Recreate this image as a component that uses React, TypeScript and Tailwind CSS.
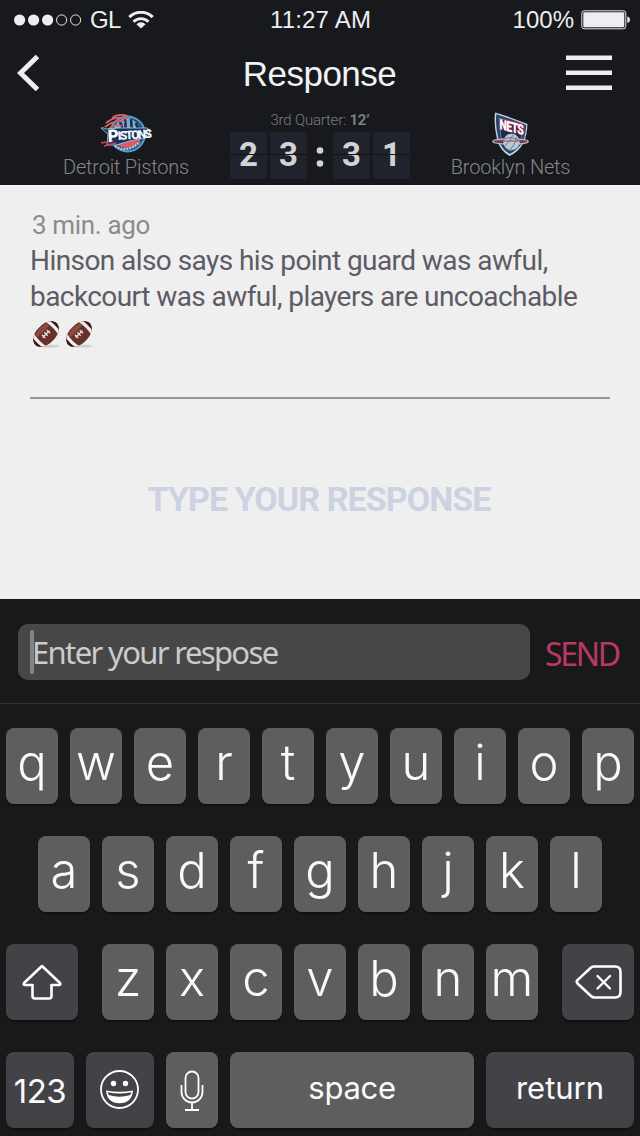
import React from "react";

const TOP_ROW = ["q", "w", "e", "r", "t", "y", "u", "i", "o", "p"];
const HOME_ROW = ["a", "s", "d", "f", "g", "h", "j", "k", "l"];
const BOTTOM_ROW = ["z", "x", "c", "v", "b", "n", "m"];

function StatusBar() {
  return (
    <div className="flex h-10 items-center justify-between pr-[10px] pl-[14px] font-['Liberation_Sans',sans-serif] text-2xl leading-10 text-[#eeeef0]">
      <div className="flex w-[197px] items-center">
        <svg className="mr-2" width="68" height="12" viewBox="0 0 68 12" fill="none">
          <circle cx="5.6" cy="6" r="5.6" fill="#eeeef0" />
          <circle cx="19.6" cy="6" r="5.6" fill="#eeeef0" />
          <circle cx="33.6" cy="6" r="5.6" fill="#eeeef0" />
          <circle cx="47.6" cy="6" r="5.1" stroke="#e2e2e4" />
          <circle cx="61.6" cy="6" r="5.1" stroke="#e2e2e4" />
        </svg>
        <span className="w-[38px] tracking-[-0.6px]">GL</span>
        <svg width="26" height="19" viewBox="0 0 26 19" fill="none" stroke="#eeeef0">
          <path d="M1.300 6.100a16.600 16.600 0 0 1 23.400 0" strokeWidth="3" />
          <path d="M5.500 10.700a10.600 10.600 0 0 1 15 0" strokeWidth="2.800" />
          <path d="M13 17.500l-4.600-4.300a6.600 6.600 0 0 1 9.200 0z" fill="#eeeef0" stroke="none" />
        </svg>
      </div>
      <span className="whitespace-nowrap tracking-[0.200px]">11:27 AM</span>
      <div className="flex w-[200px] items-center justify-end">
        <span className="mr-[7px]">100%</span>
        <svg className="overflow-visible" width="49" height="20" viewBox="0 0 49 20" fill="none">
          <rect x="0.8" y="0.8" width="44" height="18" rx="2.400" stroke="#e6e6e8" />
          <rect x="2.300" y="2.300" width="41" height="15" rx="1" fill="#eeeef0" />
          <path d="M46.300 6.600c3.600.8 3.600 5.600 0 6.400z" fill="#eeeef0" />
        </svg>
      </div>
    </div>
  );
}

function NavBar() {
  return (
    <div className="flex h-[68px] items-center justify-between pr-7 pl-[17px]">
      <div className="w-[56px]">
        <svg className="mt-[-2px]" width="46" height="36" viewBox="0 0 46 36" fill="none">
          <path d="M20.500 1.500L3.500 18l17 16.500" stroke="#eeeef2" strokeWidth="5" strokeLinejoin="miter" />
        </svg>
      </div>
      <h1 className="font-['Liberation_Sans',sans-serif] text-[35px] leading-[68px] tracking-[-0.500px] text-[#f2f2f4]">Response</h1>
      <svg className="mt-[-3px]" width="46" height="36" viewBox="0 0 46 36" fill="#eeeef2">
        <rect y="0.500" width="46" height="4.500" />
        <rect y="15.500" width="46" height="4.500" />
        <rect y="30.500" width="46" height="4.500" />
      </svg>
    </div>
  );
}

function PistonsLogo() {
  return (
    <svg className="overflow-visible" width="52" height="40" viewBox="0 0 52 40">
      <circle cx="27.500" cy="20" r="18.500" fill="#5d9bc4" />
      <circle cx="27.500" cy="20" r="16.500" fill="#1f4e83" />
      <path d="M14 13C19 5 26 2 32 5l7 6-7 8-18 2z" fill="#7ea9c8" />
      <path d="M20 8l4 10M25 4l1 14M31 5l1 14M36 9l3 9" stroke="#172d52" strokeWidth="2.500" />
      <path d="M28 2q-10-3-16 2M27 5Q16 1 6 9M25 8Q15 5 5 13M22 12Q14 9 8 16" stroke="#d7616b" strokeWidth="1.800" fill="none" />
      <path d="M14 28q9-4 27-4-3 8-11 10-10 1-16-6z" fill="#d95b66" />
      <path d="M15 32q12 8 25-4" stroke="#a4d2e8" strokeWidth="2.200" strokeDasharray="2 1" fill="none" />
      <path d="M1 14q2-1 5 1l12-1 29 0 3 2-2 7-18 4-14 4-9 0 1-11z" fill="#17345f" stroke="#b9d2e2" strokeWidth="0.800" />
      <path d="M1 29l12-2M4 32l12-3" stroke="#cc4354" strokeWidth="1.500" />
      <text x="8" y="28" fontFamily="Roboto, sans-serif" fontSize="17" fontWeight="900" fill="#fff" transform="rotate(-3 10 26)">P</text>
      <text x="18" y="26" fontFamily="Roboto, sans-serif" fontSize="12" fontWeight="900" fill="#f2f6fa" letterSpacing="-1.700" transform="rotate(-4 19 25)">ISTONS</text>
    </svg>
  );
}

function NetsLogo() {
  return (
    <svg className="overflow-visible" width="38" height="44" viewBox="0 0 38 44">
      <path d="M3 .5q14 4 32.500 11.500-.5 11-4 19-5 9-14 13Q8 39 5 27 1.500 12 3 .5z" fill="#c2d6e3" />
      <path d="M4.300 2.200q13 4 29.900 10.800-.5 10-3.500 17-5 8-13 12Q9 37 6.500 27 3 13 4.300 2.200z" fill="#264568" />
      <path d="M7 6q12 3 24 9l-2 13q-4 7-11 11-7-5-9-14z" fill="#1b294d" stroke="#6f8da8" strokeWidth="0.800" />
      <ellipse cx="18.500" cy="29.500" rx="17.800" ry="2.600" fill="#263754" stroke="#c5b0bc" strokeWidth="1.200" />
      <circle cx="19.500" cy="30" r="8.300" fill="#b9cad5" />
      <path d="M12 27q7-3 15 1M13 34q5-5 8-11M18 38q5-5 7-13" stroke="#64798d" strokeWidth="1" fill="none" />
      <path d="M3 29h32" stroke="#b44a65" strokeWidth="1.200" />
      <text x="0" y="0" fontFamily="Roboto, sans-serif" fontSize="10.500" fontWeight="900" fill="#fff" stroke="#b93a5c" strokeWidth="1" paintOrder="stroke" letterSpacing="-0.700" transform="translate(7.500 17) skewY(14) scale(1 1.350)">NETS</text>
    </svg>
  );
}

function Digit({ value }: { value: string }) {
  return (
    <div className="relative flex h-[47px] w-[37px] items-center justify-center rounded-[3px] bg-[#20232c]">
      <span className="mt-[-2px]">{value}</span>
      <i className="absolute inset-x-0 top-[22px] h-px bg-[#111317]" />
    </div>
  );
}

function ScoreBoard() {
  return (
    <div className="flex h-[77px] justify-between font-['Roboto',sans-serif]">
      <div className="flex w-[220px] flex-col items-center pt-1 pl-8">
        <div className="h-[43px] pt-[2px]"><PistonsLogo /></div>
        <div className="text-xl leading-6 font-light tracking-[-0.200px] whitespace-nowrap text-[#85868b]">Detroit Pistons</div>
      </div>
      <div className="flex w-[180px] flex-col items-center">
        <div className="h-6 text-[15px] leading-6 font-light tracking-[-0.200px] text-[#7b7c87]">
          3rd Quarter: <b className="font-bold">12’</b>
        </div>
        <div className="flex gap-[3px] text-[33px] leading-none font-bold text-[#d3d3d5]">
          <Digit value="2" />
          <Digit value="3" />
          <div className="flex h-[47px] w-[20px] items-center justify-center">
            <svg width="8" height="22" viewBox="0 0 8 22" fill="#d3d3d5"><circle cx="4" cy="5.500" r="3.300" /><circle cx="4" cy="18.500" r="3.300" /></svg>
          </div>
          <Digit value="3" />
          <Digit value="1" />
        </div>
      </div>
      <div className="flex w-[220px] flex-col items-center pt-1 pr-[19px]">
        <div className="mr-5 h-[43px]"><NetsLogo /></div>
        <div className="mr-5 text-xl leading-6 font-light tracking-[-0.200px] whitespace-nowrap text-[#85868b]">Brooklyn Nets</div>
      </div>
    </div>
  );
}

function Football({ id }: { id: string }) {
  return (
    <svg width="29" height="28" viewBox="-0.500 -0.500 30 29">
      <clipPath id={id}><path d="M-2 13C-.5 6 6 3 14 3S28.500 6 30 13C28.500 20 22 23 14 23S-.5 20-2 13z" /></clipPath>
      <ellipse cx="17" cy="25.500" rx="11" ry="1.500" fill="#cfcfcc" />
      <g transform="rotate(-45 14 13)" clipPath={`url(#${id})`}>
        <rect x="-4" width="36" height="26" fill="#66302b" />
        <path d="M2 8Q8 4 14 4t12 4q-12 3-24 0z" fill="#8a4a42" />
        <path d="M-4 0h7q-2 13 0 26h-7zM32 0h-7q2 13 0 26h7z" fill="#431320" />
        <path d="M2.500 0h3.500q-3 13 0 26H2.500q-3-13 0-26zM25.500 0H22q3 13 0 26h3.500q3-13 0-26z" fill="#f0eee9" />
        <path d="M9 13h10M10.500 10.500v5M14 10.500v5M17.500 10.500v5" stroke="#eadfd6" strokeWidth="1.400" />
      </g>
    </svg>
  );
}

function Post() {
  return (
    <main className="flex h-[414px] flex-col border-t-2 border-[#f5f4f6] bg-[#efefef] px-[30px] font-['Roboto',sans-serif]">
      <div className="h-[212px] flex-none border-b-2 border-[#949694] pt-5">
        <div className="pl-[2px] text-[26px] leading-9 tracking-[-0.350px] text-[#8b8b8b]">3 min. ago</div>
        <p className="text-[28px] leading-9 tracking-[-0.570px] whitespace-nowrap text-[#5d5b65]">
          Hinson also says his point guard was awful,
          <br />
          backcourt was awful, players are uncoachable
        </p>
        <div className="mt-1 flex gap-[4px] pt-[2px] pl-[2px]"><Football id="ball-a" /><Football id="ball-b" /></div>
      </div>
      <div className="flex flex-1 items-center justify-center pr-[2px] text-[34px] leading-none font-bold tracking-[-0.930px] whitespace-nowrap text-[#ccd2e2]">
        TYPE YOUR RESPONSE
      </div>
    </main>
  );
}

function InputBar() {
  return (
    <div className="flex h-[105px] items-start border-b border-[#343434] pt-[25px] pl-[18px] font-['Noto_Sans',sans-serif]">
      <div className="flex h-14 w-[512px] items-center rounded-[10px] bg-[#474747] pl-3">
        <i className="h-11 w-1 rounded-[2px] bg-[#858585]" />
        <span className="ml-[-2px] text-[31px] leading-[56px] tracking-[-1.650px] whitespace-nowrap text-[#cbcbcb]">Enter your respose</span>
      </div>
      <button className="ml-[15px] text-[32px] leading-[59px] tracking-[-2.300px] text-[#b83a63]">SEND</button>
    </div>
  );
}

const KEY = "flex h-[76px] items-center justify-center rounded-lg shadow-[0_2px_1px_#101010]";

function Letter({ char }: { char: string }) {
  return (
    <button className={`${KEY} w-[52px] bg-[#5e5e5e] pb-[6px] text-[49px] leading-[68px] font-light`}>{char}</button>
  );
}

function Keyboard() {
  return (
    <div className="flex flex-col gap-8 px-[6px] pt-6 font-['Inter',sans-serif] text-[#fafafa]">
      <div className="flex justify-between">{TOP_ROW.map((c) => <Letter key={c} char={c} />)}</div>
      <div className="flex justify-center gap-3">{HOME_ROW.map((c) => <Letter key={c} char={c} />)}</div>
      <div className="flex justify-between">
        <button className={`${KEY} w-[72px] bg-[#434246] pb-[1px]`}>
          <svg width="40" height="36" viewBox="0 0 40 36" fill="none" stroke="#fff" strokeWidth="2.600" strokeLinejoin="round">
            <path d="M20 2L38 19q1 2-1 2h-7.500v11q0 2.500-2.500 2.500H13q-2.500 0-2.500-2.500V21H3q-2 0-1-2z" />
          </svg>
        </button>
        <div className="flex gap-3">{BOTTOM_ROW.map((c) => <Letter key={c} char={c} />)}</div>
        <button className={`${KEY} w-[72px] bg-[#434246] pl-[1px]`}>
          <svg width="48" height="36" viewBox="0 0 48 36" fill="none" stroke="#fff" strokeWidth="2.600" strokeLinejoin="round">
            <path d="M18.500 2.500H40q5.500 0 5.500 5.500v20q0 5.500-5.500 5.500H19.500q-2 0-3.500-1.500L2.500 19.500q-1.500-1.700 0-3.400L15.500 4Q17 2.500 18.500 2.500z" />
            <path d="M22.500 12l12.500 12.500M35 12L22.500 24.500" strokeLinecap="round" strokeWidth="2.400" />
          </svg>
        </button>
      </div>
      <div className="flex gap-3">
        <button className={`${KEY} w-[68px] bg-[#434246] pt-[3px] text-[33px] tracking-[-0.500px]`}>123</button>
        <button className={`${KEY} w-[68px] bg-[#434246] pb-[1px]`}>
          <svg width="40" height="40" viewBox="0 0 40 40" fill="none" stroke="#fff" strokeWidth="1.800">
            <circle cx="19.500" cy="19.500" r="18.500" />
            <circle cx="13.500" cy="13.500" r="2.700" fill="#fff" stroke="none" />
            <circle cx="25.500" cy="13.500" r="2.700" fill="#fff" stroke="none" />
            <path d="M6 20.500q13.500 2.500 27 0-1 12.500-13.500 12.800Q7 33 6 20.500z" fill="#fff" stroke="none" />
            <path d="M7.700 22.300q11.800 2.500 23.600 0l-1 2.700q-10.800 3.500-21.600 0z" fill="#434246" stroke="none" />
          </svg>
        </button>
        <button className={`${KEY} w-[52px] bg-[#5e5e5e] pt-[2px]`}>
          <svg width="24" height="42" viewBox="0 0 24 42" fill="none" stroke="#fff" strokeWidth="1.800">
            <rect x="5.500" y="1.500" width="13" height="27" rx="6.500" />
            <path d="M1.500 15v7a10.500 10.500 0 0 0 21 0v-7M12 32.500V40M5 40h14" />
          </svg>
        </button>
        <button className={`${KEY} w-[244px] bg-[#5e5e5e] pb-[3px] text-[31px] tracking-[-0.300px]`}>space</button>
        <button className={`${KEY} w-[148px] bg-[#434246] pb-[3px] text-[31px]`}>return</button>
      </div>
    </div>
  );
}

export default function App() {
  return (
    <div className="h-[1136px] w-[640px] overflow-hidden bg-[#191919]">
      <header className="h-[185px] bg-[#17191d]">
        <StatusBar />
        <NavBar />
        <ScoreBoard />
      </header>
      <Post />
      <InputBar />
      <Keyboard />
    </div>
  );
}
